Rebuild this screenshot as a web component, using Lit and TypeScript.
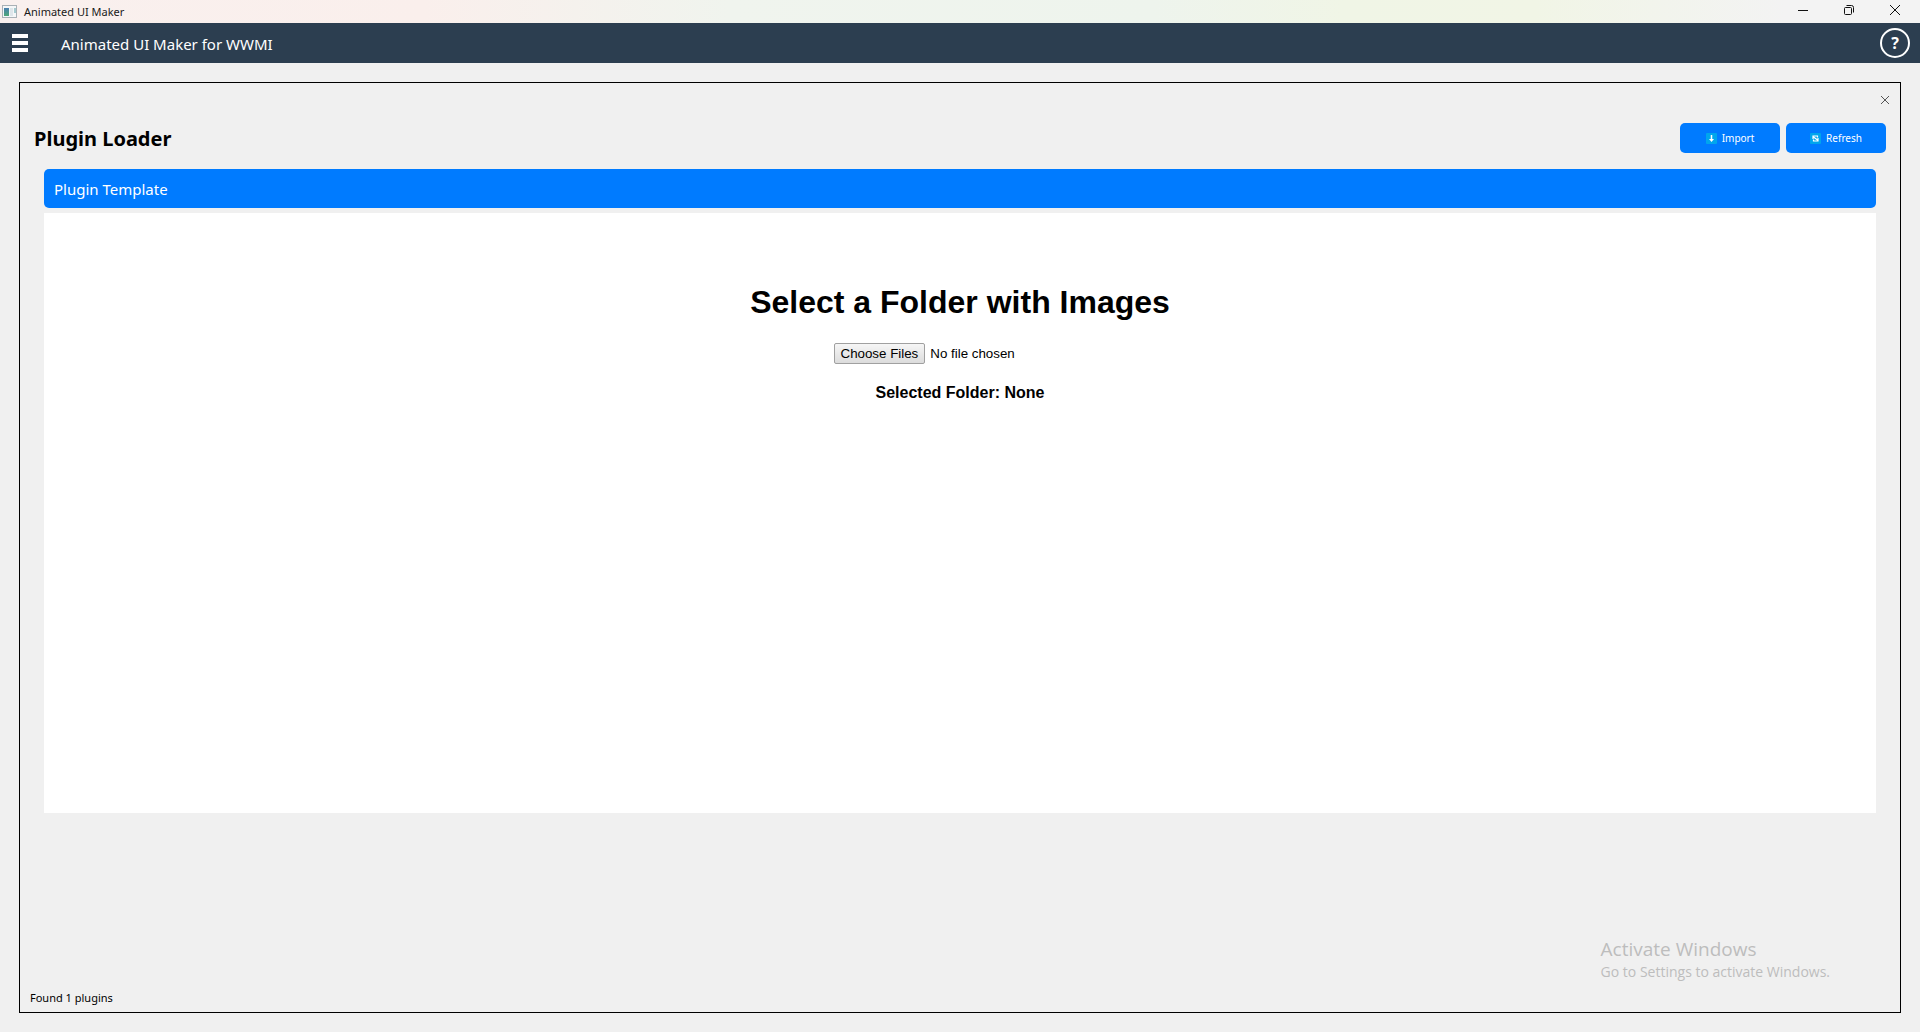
import { LitElement, html, css, svg } from "lit";
import { customElement, property, state } from "lit/decorators.js";

@customElement("window-title-bar")
class WindowTitleBar extends LitElement {
  @property() label = "";

  static styles = css`
    :host {
      display: flex;
      justify-content: space-between;
      height: 23px;
      padding-right: 2px;
      background: linear-gradient(90deg, #f9f0ee 0%, #faefec 22%, #f0f4ee 38%, #eef4ed 60%, #f0f5e6 70%, #f1f5e6 80%, #f3f3f3 93%);
    }
    .name {
      display: flex;
      align-items: center;
      gap: 6px;
      padding-left: 2px;
      font-size: 11px;
      line-height: 23px;
      color: #1a1a1a;
    }
    .controls {
      display: flex;
    }
    .control {
      display: grid;
      place-items: center;
      width: 46px;
      padding: 0 0 3px;
      border: 0;
      background: none;
      color: #111;
    }
    svg {
      display: block;
    }
  `;

  render() {
    return html`
      <div class="name">
        <svg width="16" height="16" viewBox="0 0 16 16" aria-hidden="true">
          <defs>
            <linearGradient id="pane" x2="0" y2="1">
              <stop offset="0" stop-color="#4a7fb0" />
              <stop offset="1" stop-color="#4fa878" />
            </linearGradient>
          </defs>
          <path fill="#a9b1b6" d="M0 1h15v13H0z" />
          <path fill="#f5f7f8" d="M1 2h13v11H1z" />
          <path fill="url(#pane)" d="M2 4h5v8H2z" />
          <path fill="#dfe6ea" d="M8 4h3v8H8z" />
          <path fill="#a5cbd0" d="M12 4h2v5h-2z" />
        </svg>
        <span>${this.label}</span>
      </div>
      <div class="controls">
        <button class="control" aria-label="Minimize">
          <svg width="12" height="12" viewBox="0 0 12 12"><path d="M1 6.500h10" stroke="currentColor" /></svg>
        </button>
        <button class="control" aria-label="Restore">
          <svg width="12" height="12" viewBox="0 0 12 12" fill="none" stroke="currentColor">
            <rect x="1.500" y="3.500" width="7" height="7" rx="1" />
            <path d="M3.500 1.500h5a2 2 0 0 1 2 2v5" />
          </svg>
        </button>
        <button class="control" aria-label="Close window">
          <svg width="12" height="12" viewBox="0 0 12 12"><path d="M1 1l10 10M11 1L1 11" stroke="currentColor" /></svg>
        </button>
      </div>
    `;
  }
}

@customElement("app-header")
class AppHeader extends LitElement {
  @property() label = "";

  static styles = css`
    :host {
      display: flex;
      align-items: center;
      height: 40px;
      padding: 0 10px 0 12px;
      background: #2c3e50;
      color: #fff;
    }
    button {
      padding: 0;
      background: none;
      color: inherit;
      font: inherit;
    }
    .menu {
      display: grid;
      gap: 3px;
      width: 16px;
      border: 0;
    }
    .line {
      height: 4px;
      background: #fff;
    }
    .label {
      flex: 1;
      padding: 2px 0 0 33px;
      font-size: 15px;
      line-height: 24px;
    }
    .help {
      width: 30px;
      height: 30px;
      border: 2px solid #fff;
      border-radius: 50%;
      font-size: 16px;
      font-weight: 700;
      line-height: 26px;
    }
  `;

  render() {
    return html`
      <button class="menu" aria-label="Menu">
        <span class="line"></span><span class="line"></span><span class="line"></span>
      </button>
      <span class="label">${this.label}</span>
      <button class="help" aria-label="Help">?</button>
    `;
  }
}

const importGlyph = svg`<path d="M5.500 2v5" stroke-width="1.500" /><path d="M3 6h5l-2.500 3z" fill="#fff" stroke="none" />`;
const refreshGlyph = svg`<path d="M3 6V3h4.500v1.500M8 5v3H3.500V6.500M3.500 4l4 3" stroke-width="1.200" />`;

@customElement("plugin-loader")
class PluginLoader extends LitElement {
  @state() plugins = ["Plugin Template"];
  @state() folder = "None";

  static styles = css`
    :host {
      box-sizing: border-box;
      display: flex;
      flex-direction: column;
      border: 1px solid #000;
      padding: 11px 14px 4px;
    }
    button {
      border: 0;
      font: inherit;
      cursor: pointer;
    }
    .close {
      align-self: flex-end;
      display: grid;
      place-items: center;
      width: 12px;
      height: 12px;
      margin-right: -5px;
      padding: 0;
      background: none;
      color: #555;
    }
    .head {
      display: flex;
      align-items: center;
      justify-content: space-between;
      padding-top: 17px;
    }
    h1 {
      margin: 0;
      padding-top: 2px;
      font-size: 20px;
      line-height: 28px;
    }
    .actions {
      display: flex;
      gap: 6px;
    }
    .action {
      display: flex;
      align-items: center;
      justify-content: center;
      gap: 5px;
      width: 100px;
      height: 30px;
      padding: 0;
      border-radius: 5px;
      background: #007bff;
      color: #fff;
      font-size: 10px;
    }
    .plugins {
      display: flex;
      flex-direction: column;
      flex: 1;
      padding: 16px 10px 0;
    }
    .plugin {
      height: 39px;
      padding: 0 10px;
      border-radius: 5px;
      background: #007bff;
      color: #fff;
      font-size: 15px;
      text-align: left;
    }
    .view {
      box-sizing: border-box;
      min-height: 600px;
      margin-top: 5px;
      padding-top: 71px;
      background: #fff;
      font-family: "Liberation Sans", Arial, sans-serif;
      text-align: center;
    }
    h2 {
      margin: 0 0 22px;
      font-size: 32px;
      line-height: 37px;
    }
    .file {
      width: 253px;
      height: 22px;
      font-family: "Liberation Sans", Arial, sans-serif;
    }
    .file::file-selector-button {
      height: 21px;
      margin: 0 5px 0 0;
      padding: 1px 6px;
      border: 1px solid #a0a0a0;
      border-radius: 2px;
      background: linear-gradient(#f6f6f6, #dcdcdc);
      color: #000;
      font: inherit;
    }
    .selected {
      margin: 18px 0 0;
      font-size: 16px;
      font-weight: 700;
      line-height: 20px;
    }
    .status {
      margin-left: -4px;
      font-size: 11px;
      line-height: 20px;
    }
    svg {
      display: block;
    }
  `;

  private pick(event: Event) {
    const files = (event.target as HTMLInputElement).files;
    this.folder = files?.length ? files[0].webkitRelativePath.split("/")[0] || files[0].name : "None";
  }

  private action(label: string, glyph: unknown) {
    return html`
      <button class="action">
        <svg width="11" height="11" viewBox="0 0 11 11" fill="none" stroke="#fff" aria-hidden="true">
          <rect width="11" height="11" rx="1" fill="#00a6ed" stroke="none" />
          ${glyph}
        </svg>
        ${label}
      </button>
    `;
  }

  render() {
    return html`
      <button class="close" aria-label="Close">
        <svg width="10" height="10" viewBox="0 0 10 10"><path d="M1 1l8 8M9 1L1 9" stroke="currentColor" /></svg>
      </button>
      <div class="head">
        <h1>Plugin Loader</h1>
        <div class="actions">
          ${this.action("Import", importGlyph)}${this.action("Refresh", refreshGlyph)}
        </div>
      </div>
      <div class="plugins">
        ${this.plugins.map((name) => html`<button class="plugin">${name}</button>`)}
        <section class="view">
          <h2 id="prompt">Select a Folder with Images</h2>
          <input class="file" type="file" multiple aria-labelledby="prompt" @change=${this.pick} />
          <p class="selected">Selected Folder: ${this.folder}</p>
        </section>
      </div>
      <div class="status">Found ${this.plugins.length} plugins</div>
    `;
  }
}

@customElement("app-root")
class AppRoot extends LitElement {
  static styles = css`
    :host {
      position: relative;
      display: flex;
      flex-direction: column;
      min-height: 100vh;
      background: #f0f0f0;
      font-family: "Noto Sans", Tahoma, sans-serif;
      color: #000;
    }
    .panel {
      flex: 1;
      margin: 19px;
    }
    .watermark {
      position: absolute;
      right: 90px;
      bottom: 50px;
      color: #bdbdbd;
      font-family: "Open Sans", "Segoe UI", sans-serif;
      font-size: 14px;
      line-height: 20px;
      pointer-events: none;
    }
    .watermark-title {
      font-size: 19px;
      line-height: 26px;
    }
  `;

  render() {
    return html`
      <window-title-bar label="Animated UI Maker"></window-title-bar>
      <app-header label="Animated UI Maker for WWMI"></app-header>
      <plugin-loader class="panel"></plugin-loader>
      <div class="watermark">
        <div class="watermark-title">Activate Windows</div>
        <div>Go to Settings to activate Windows.</div>
      </div>
    `;
  }
}
